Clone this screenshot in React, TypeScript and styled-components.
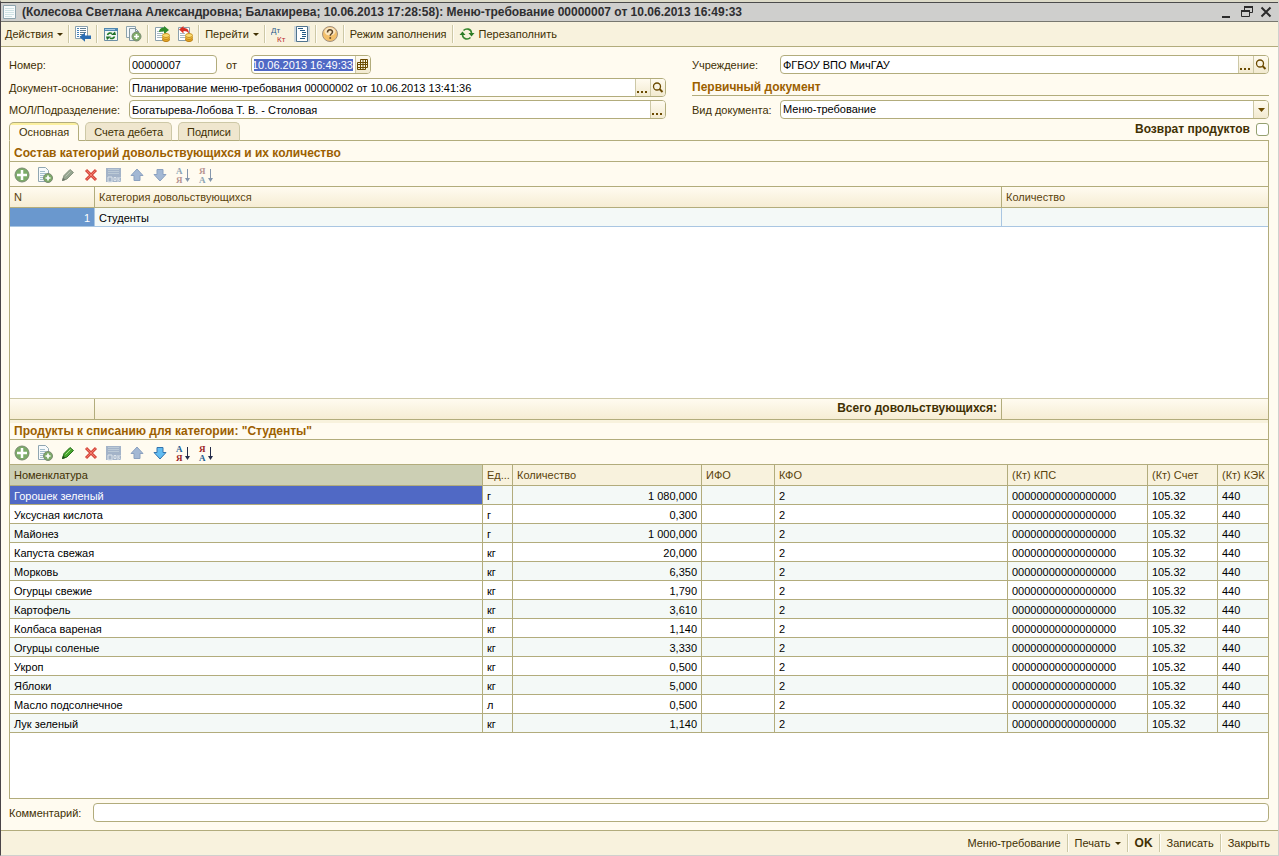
import React, { useEffect, useRef } from 'react';
import styled, { createGlobalStyle, css } from 'styled-components';

const line = '#b2ac7c';
const softLine = '#cdc8a6';
const paper = '#fffbf0';
const bar = '#f8f2dd';
const ink = '#413003';
const heading = '#9c6000';

const GlobalStyle = createGlobalStyle`
  *, *::before, *::after { box-sizing: border-box; }
  body { margin: 0; background: ${paper}; }
  body, button, input, select, table {
    font-family: "Liberation Sans", Arial, sans-serif;
    font-size: 11px;
    line-height: 15px;
    color: ${ink};
  }
`;

const Window = styled.main`
  display: flex;
  flex-direction: column;
  min-height: 100vh;
  background: ${paper};
  border: 1px solid #d0d0ce;
  border-left-color: #4a4448;
  border-top: 2px solid #dddbc9;
`;

const TitleBar = styled.header`
  display: flex;
  align-items: center;
  gap: 4px;
  height: 20px;
  padding: 0 4px 0 1px;
  background: #cfcfcd;
  border-top: 1px solid #4b4b4b;
  border-bottom: 1px solid #77776f;
`;

const Title = styled.h1`
  flex: 1;
  margin: 0;
  font-size: 12px;
  line-height: 16px;
  color: #2e2e30;
  white-space: nowrap;
`;

const WindowButtons = styled.div`
  display: flex;
  gap: 4px;
`;

const PlainButton = styled.button`
  display: flex;
  align-items: center;
  justify-content: center;
  padding: 0;
  border: 0;
  background: none;
`;

const WindowButton = styled(PlainButton)`
  width: 16px;
  height: 16px;
`;

const Separator = styled.i`
  width: 2px;
  height: 18px;
  margin: 0 5px;
  background: linear-gradient(to right, ${softLine} 50%, #fffdf6 50%);
`;

const ToolBar = styled.div`
  display: flex;
  align-items: center;
  height: 25px;
  padding: 0 4px;
  background: ${bar};
  border-bottom: 1px solid ${line};
`;

const IconGroup = styled.div`
  display: flex;
  gap: 7px;
`;

const ToolButton = styled(PlainButton)<{ $icon?: boolean; $strong?: boolean }>`
  gap: 4px;
  height: 20px;
  white-space: nowrap;
  ${p => p.$icon && css`width: 16px;`}
  ${p => p.$strong && css`font-size: 12px; font-weight: bold;`}
`;

const Content = styled.div`
  flex: 1;
  display: flex;
  flex-direction: column;
  padding: 8px 9px 8px 8px;
`;

const FormGrid = styled.div`
  display: grid;
  grid-template-columns: 657fr 577fr;
  column-gap: 26px;
  margin-bottom: 3px;
`;

const FormColumn = styled.div<{ $label: number }>`
  display: grid;
  grid-template-columns: ${p => p.$label}px minmax(0, 1fr);
  grid-template-rows: 23px 22px 19px;
`;

const Label = styled.label`
  height: 19px;
  line-height: 20px;
  white-space: nowrap;
`;

const Field = styled.div<{ $width?: number }>`
  display: flex;
  width: ${p => (p.$width ? p.$width + 'px' : '100%')};
  height: 19px;
  background: #fff;
  border: 1px solid ${line};
  border-radius: 4px;
  overflow: hidden;
`;

const control = css`
  flex: 1;
  min-width: 0;
  height: 17px;
  padding: 1px 2px;
  border: 0;
  outline: 0;
  background: none;
  color: #000;
`;

const TextInput = styled.input`
  ${control}
  &::selection { background: #5069c5; color: #fff; }
`;

const Select = styled.select`
  ${control}
  appearance: none;
`;

const FieldButton = styled(PlainButton)`
  width: 15px;
  height: 17px;
  border-left: 1px solid ${softLine};
  background: linear-gradient(${paper}, #f2ead0);
`;

const ArrowBox = styled.span`
  display: flex;
  align-items: center;
  justify-content: center;
  width: 15px;
  border-left: 1px solid ${softLine};
  background: linear-gradient(${paper}, #f2ead0);
`;

const DateRow = styled.div`
  display: flex;
`;

const DateLabel = styled(Label)`
  width: 34px;
  padding-left: 9px;
`;

const GroupTitle = styled.h2`
  grid-column: 1 / -1;
  height: 18px;
  margin: 0;
  font-size: 12px;
  line-height: 19px;
  color: ${heading};
  border-bottom: 1px solid ${line};
`;

const TabRow = styled.div`
  display: flex;
  align-items: stretch;
  height: 19px;
`;

const Tab = styled.button<{ $active?: boolean }>`
  padding: 2px ${p => (p.$active ? 9 : 8)}px 0;
  border: 1px solid ${p => (p.$active ? line : softLine)};
  border-bottom-color: ${p => (p.$active ? paper : line)};
  border-radius: 5px 5px 0 0;
  background: ${p => (p.$active ? `linear-gradient(#fbf0a0 2px, ${paper} 2px)` : '#efe6ce')};
  white-space: nowrap;
`;

const TabGap = styled.i`
  width: 6px;
  border-bottom: 1px solid ${line};
`;

const TabRest = styled.div`
  flex: 1;
  display: flex;
  justify-content: flex-end;
  border-bottom: 1px solid ${line};
`;

const CheckLabel = styled.label`
  display: flex;
  gap: 6px;
  height: 15px;
  font-size: 12px;
  font-weight: bold;
`;

const CheckBox = styled.input`
  appearance: none;
  width: 13px;
  height: 13px;
  margin: 1px 0 0;
  border: 1px solid #94a070;
  border-radius: 3px;
  background: #fff;
`;

const Panel = styled.section`
  flex: 1;
  display: flex;
  flex-direction: column;
  border: 1px solid ${line};
  border-top: 0;
`;

const SectionTitle = styled.h2<{ $divided?: boolean }>`
  height: ${p => (p.$divided ? 20 : 21)}px;
  margin: 0;
  padding: ${p => (p.$divided ? 1 : 5)}px 4px 0;
  font-size: 12px;
  line-height: 15px;
  color: ${heading};
  border-top: ${p => (p.$divided ? 3 : 0)}px solid ${bar};
  border-bottom: 1px solid ${line};
`;

const TableTools = styled.div`
  display: flex;
  align-items: center;
  gap: 7px;
  height: 25px;
  padding: 2px 4px 0;
  border-bottom: 1px solid ${line};
`;

const TableArea = styled.div<{ $share: number }>`
  flex: ${p => p.$share} 1 0;
  background: #fff;
`;

const Table = styled.table`
  width: 100%;
  border-collapse: separate;
  border-spacing: 0;
  table-layout: fixed;
`;

const HeadCell = styled.th<{ $tone?: 'shaded' | 'current' }>`
  height: 21px;
  padding: 0 4px;
  font-weight: normal;
  text-align: left;
  white-space: nowrap;
  overflow: hidden;
  color: ${p => (p.$tone === 'current' ? ink : '#5a430c')};
  background: ${p =>
    p.$tone === 'shaded' ? `linear-gradient(${paper}, #f6edd4)` : p.$tone === 'current' ? '#cccfb4' : bar};
  border-right: 1px solid ${line};
  border-bottom: 1px solid ${line};
  &:last-child { border-right: 0; padding-right: 0; }
`;

const Cell = styled.td<{ $right?: boolean; $fill?: string; $edge?: string }>`
  height: 19px;
  padding: 3px 4px 0;
  text-align: ${p => (p.$right ? 'right' : 'left')};
  white-space: nowrap;
  color: ${p => (p.$fill ? '#fff' : '#000')};
  background: ${p => p.$fill || 'transparent'};
  border-right: 1px solid ${p => p.$edge || line};
  border-bottom: 1px solid ${p => p.$edge || line};
  &:last-child { border-right: 0; }
`;

const Row = styled.tr`
  &:nth-child(odd) { background: #f4f9f7; }
`;

const TotalRow = styled.div`
  display: grid;
  grid-template-columns: 85px 1fr 266px;
  height: 22px;
  border-top: 1px solid ${softLine};
  border-bottom: 1px solid ${line};
  background: linear-gradient(${paper}, #f6edd4);
`;

const TotalCell = styled.div`
  padding: 2px 4px 0;
  font-size: 12px;
  font-weight: bold;
  text-align: right;
  border-right: 1px solid ${line};
  &:last-child { border-right: 0; }
`;

const CommentRow = styled.div`
  display: flex;
  margin-top: 4px;
`;

const CommentLabel = styled(Label)`
  flex: 0 0 84px;
`;

const Footer = styled.footer`
  display: flex;
  align-items: center;
  justify-content: flex-end;
  height: 25px;
  padding: 0 8px;
  background: ${bar};
  border-top: 1px solid ${line};
  ${Separator} { margin: 0 6px; }
`;

/* Icons */

const Svg = ({ size = 16, children }: { size?: number; children: React.ReactNode }) => (
  <svg width={size} height={size} viewBox={`0 0 ${size} ${size}`} fill="none" aria-hidden="true">{children}</svg>
);

const Caret = ({ color = ink }: { color?: string }) => (
  <svg width="7" height="4" viewBox="0 0 7 4" aria-hidden="true"><path d="M0 0h7L3.500 4z" fill={color} /></svg>
);

const SmallCaret = () => (
  <svg width="6" height="3" viewBox="0 0 6 3" aria-hidden="true"><path d="M0 0h6L3 3z" fill={ink} /></svg>
);

const Sheet = () => (
  <Svg>
    <path d="M1.500 1.500h12v13h-12z" fill="#f8fbfc" stroke="#8ea4ae" />
    <path d="M3 4.500h9M3 6.500h9M3 8.500h9M3 10.500h9M3 12.500h7" stroke="#cfe2e4" />
  </Svg>
);

const Minimize = () => <Svg><path d="M4 12h8v2H4z" fill="#2b2b2b" /></Svg>;
const Restore = () => (
  <Svg>
    <path d="M6.500 6V2.500h8v6H12" stroke="#2b2b2b" /><path d="M6 2h9v2H6z" fill="#2b2b2b" />
    <path d="M3.500 6.500h8v6h-8z" stroke="#2b2b2b" /><path d="M3 6h9v2H3z" fill="#2b2b2b" />
  </Svg>
);
const Close = () => <Svg><path d="M3.500 3.500l9 9M12.500 3.500l-9 9" stroke="#2b2b2b" strokeWidth="2" /></Svg>;

const PostAndClose = () => (
  <Svg>
    <path d="M.5 .5h12v12H.5z" fill="#fff" stroke="#8ba1ad" />
    <path d="M5 2.500h6M5 4.500h6M5 6.500h6M5 8.500h3M5 10.500h1" stroke="#5f7f93" />
    <path d="M2 2.500h2M2 4.500h2M2 6.500h2M2 8.500h2M2 10.500h2" stroke="#4382b8" />
    <path d="M4.500 11l5.500-4.500V9.500h6v3.500h-6v2.800z" fill="#2a6db2" />
  </Svg>
);

const Reread = () => (
  <Svg>
    <path d="M1.500 2.500h13v12h-13z" fill="#f3f7f5" stroke="#6c8fa5" />
    <path d="M1 2h14v3H1z" fill="#4f87b0" />
    <path d="M2 3.500h10" stroke="#a8cbe2" />
    <path d="M4.500 9C5 7 7.500 6.500 9 7.500M11.500 10.500C11 12.500 8.500 13 7 12" stroke="#247a2c" strokeWidth="1.600" />
    <path d="M8 9h5l-1-3.500zM3 10.500h5L4 14z" fill="#1d6f27" />
  </Svg>
);

const Badge = ({ x, y, r = 4 }: { x: number; y: number; r?: number }) => (
  <>
    <circle cx={x} cy={y} r={r} fill="#7cab68" stroke="#7b8a72" />
    <path d={`M${x - r + 2} ${y}h${2 * r - 4}M${x} ${y - r + 2}v${2 * r - 4}`} stroke="#fff" strokeWidth={r > 5 ? 2.500 : 1.700} />
  </>
);

const CopyDoc = () => (
  <Svg>
    <path d="M.5 .5h9v11h-9z" fill="#f4f8f9" stroke="#8da3ad" />
    <path d="M3.500 2.500h6l3 3v9h-9z" fill="#eef4f6" stroke="#8298a3" />
    <path d="M9.500 2.500v3h3" stroke="#8298a3" />
    <Badge x={10.5} y={10.5} r={4.5} />
  </Svg>
);

const Coins = () => (
  <>
    <ellipse cx="12" cy="13.500" rx="3.500" ry="2" fill="#e8aa28" stroke="#b77a12" />
    <ellipse cx="12" cy="11.500" rx="3.500" ry="2" fill="#f3bd3c" stroke="#c38a1c" />
    <ellipse cx="12" cy="9.500" rx="3.500" ry="2" fill="#fadb72" stroke="#c99424" />
  </>
);

const Post = () => (
  <Svg>
    <path d="M1.500 1.500h10v13h-10z" fill="#fff" stroke="#8aa0ac" />
    <path d="M3 5.500h6M3 7.500h6M3 9.500h5M3 11.500h5" stroke="#a9bac4" />
    <path d="M5 6c0-3 2-4.500 5-4.500V0l5 4-5 4V5.500C8 5.500 7 5 5 6z" fill="#2f8a2b" />
    <Coins />
  </Svg>
);

const Unpost = () => (
  <Svg>
    <path d="M1.500 1.500h11v13h-11z" fill="#fff" stroke="#8aa0ac" />
    <path d="M3 7.500h5M3 9.500h5M3 11.500h5" stroke="#a9bac4" />
    <path d="M2 3.500L6.500 0v2c4 0 5.500 2 5.500 6-1-2-2-3-5.500-3v2.500z" fill="#d82f22" />
    <Coins />
  </Svg>
);

const DebitCredit = () => (
  <svg width="16" height="20" viewBox="0 0 16 20" fill="none" aria-hidden="true">
    <text x="0" y="9" fontSize="8" fill="#2f5d8c" fontFamily="Liberation Sans">Дт</text>
    <text x="6" y="18" fontSize="8" fill="#bd3030" fontFamily="Liberation Sans">Кт</text>
  </svg>
);

const Journal = () => (
  <Svg>
    <path d="M0 0h16v16H0z" fill="#cfd8dc" />
    <path d="M2.500 .5h11v15h-11z" fill="#fff" stroke="#50748e" />
    <path d="M4 2.500h5M6 4.500h5M8 6.500h4M8 8.500h4M8 10.500h4M6 12.500h5" stroke="#245b86" />
  </Svg>
);

const Help = () => (
  <Svg>
    <circle cx="8" cy="8" r="7.500" fill="#f3c06c" stroke="#a09080" />
    <ellipse cx="8" cy="5.500" rx="5.500" ry="4" fill="#fae6c2" />
    <path d="M5.500 6.500c0-3.500 5-3.500 5-.5 0 1.800-2.300 1.800-2.300 3.800" stroke="#5c4426" strokeWidth="1.500" />
    <path d="M7.400 11.200h1.700v1.600H7.400z" fill="#5c4426" />
  </Svg>
);

const Refill = () => (
  <Svg>
    <path d="M4.500 4.500C7 2 12 2.500 12.500 7M11.500 11.500C9 14 4 13.500 3.500 9" stroke="#37862f" strokeWidth="1.600" />
    <path d="M9.500 7h6l-3 3.500zM.5 9h6l-3-3.500z" fill="#2b7a26" />
  </Svg>
);

const Add = () => <Svg><Badge x={8} y={8} r={7} /></Svg>;
const AddCopy = () => (
  <Svg>
    <path d="M1.500 .5h7l3 3v11h-10z" fill="#f7fafb" stroke="#90a6b1" />
    <path d="M3 4.500h5M3 6.500h6M3 8.500h4M3 10.500h3M3 12.500h3" stroke="#a4bfcc" />
    <Badge x={11} y={11} r={4.5} />
  </Svg>
);
const Pencil = ({ on }: { on?: boolean }) => (
  <Svg>
    <path d="M2.500 13.500l1.500-5 6-6 3.500 3-6.500 6.500z" fill={on ? '#48a62e' : '#95a590'} stroke={on ? '#28701c' : '#87937f'} />
    <path d="M5.500 9.500l5-5" stroke={on ? '#a7de8a' : '#b8c2b0'} />
    <path d="M2 14l1-3.500L5.500 13z" fill={on ? '#1d4d18' : '#6e776a'} />
  </Svg>
);
const Delete = () => (
  <Svg>
    <path d="M3 3l10 10M13 3L3 13" stroke="#d5483c" strokeWidth="3" />
    <path d="M3.500 3.500l9 9M12.500 3.500l-9 9" stroke="#f3786a" />
  </Svg>
);
const SaveRow = () => (
  <Svg>
    <path d="M0 1h15v14H0z" fill="#a3b3c8" />
    <path d="M2 2.500h11M2 4.500h11M2 6.500h11" stroke="#bccad6" />
    <path d="M2 10h4v5H2zM8 10.500h2v3H8zM12 10v5M14.500 10l-2 2 2 2.500" stroke="#dde4ea" />
  </Svg>
);
const MoveUp = () => <Svg><path d="M8 2l6 6.500h-3v5H5v-5H2z" fill="#a3b8d4" stroke="#8ba1c0" /></Svg>;
const MoveDown = ({ on }: { on?: boolean }) => (
  <Svg><path d="M8 14l6-6.500h-3v-5H5v5H2z" fill={on ? '#62bdf2' : '#a3b8d4'} stroke={on ? '#3474ad' : '#8ba1c0'} /></Svg>
);
const Sort = ({ on, letters }: { on?: boolean; letters: [string, string] }) => {
  const tint = (l: string) => (l === 'А' ? (on ? '#1c5f94' : '#8ca3b3') : on ? '#9c1f26' : '#b89492');
  const arrow = on ? '#232b4a' : '#8496ac';
  return (
    <svg width="16" height="20" viewBox="0 0 16 20" fill="none" aria-hidden="true">
      <text x="1" y="9" fontSize="9" fontWeight="bold" fontFamily="Liberation Serif" fill={tint(letters[0])}>{letters[0]}</text>
      <text x="1" y="18" fontSize="9" fontWeight="bold" fontFamily="Liberation Serif" fill={tint(letters[1])}>{letters[1]}</text>
      <path d="M12.500 4v12" stroke={arrow} /><path d="M10 13h5l-2.500 4z" fill={arrow} />
    </svg>
  );
};

const Dots = () => <Svg size={14}><path d="M1 10h2v2H1zM5 10h2v2H5zM9 10h2v2H9z" fill="#6b4a00" /></Svg>;
const Loupe = () => (
  <Svg size={14}>
    <circle cx="6" cy="5.500" r="3.500" stroke="#6b4a00" strokeWidth="1.300" />
    <path d="M8.500 8l3 3" stroke="#6b4a00" strokeWidth="2" />
  </Svg>
);
const Calendar = () => (
  <Svg size={14}>
    <path d="M4.500 1.500h7v8h-2v2h-8v-7h3z" stroke="#6b4a00" />
    <path d="M2 6.500h9M2 9.500h7M4.500 4.500h7M4.500 2v9M7 2v9M9.500 2v8" stroke="#6b4a00" />
  </Svg>
);

/* Data */

type Product = [name: string, unit: string, amount: string];

const products: Product[] = [
  ['Горошек зеленый', 'г', '1 080,000'],
  ['Уксусная кислота', 'г', '0,300'],
  ['Майонез', 'г', '1 000,000'],
  ['Капуста свежая', 'кг', '20,000'],
  ['Морковь', 'кг', '6,350'],
  ['Огурцы свежие', 'кг', '1,790'],
  ['Картофель', 'кг', '3,610'],
  ['Колбаса вареная', 'кг', '1,140'],
  ['Огурцы соленые', 'кг', '3,330'],
  ['Укроп', 'кг', '0,500'],
  ['Яблоки', 'кг', '5,000'],
  ['Масло подсолнечное', 'л', '0,500'],
  ['Лук зеленый', 'кг', '1,140'],
];

const RowTools = ({ on }: { on?: boolean }) => (
  <TableTools>
    <ToolButton $icon aria-label="Добавить"><Add /></ToolButton>
    <ToolButton $icon aria-label="Скопировать"><AddCopy /></ToolButton>
    <ToolButton $icon aria-label="Изменить"><Pencil on={on} /></ToolButton>
    <ToolButton $icon aria-label="Удалить"><Delete /></ToolButton>
    <ToolButton $icon aria-label="Закончить редактирование"><SaveRow /></ToolButton>
    <ToolButton $icon aria-label="Вверх"><MoveUp /></ToolButton>
    <ToolButton $icon aria-label="Вниз"><MoveDown on={on} /></ToolButton>
    <ToolButton $icon aria-label="По возрастанию"><Sort on={on} letters={['А', 'Я']} /></ToolButton>
    <ToolButton $icon aria-label="По убыванию"><Sort on={on} letters={['Я', 'А']} /></ToolButton>
  </TableTools>
);

export default function App() {
  const dateRef = useRef<HTMLInputElement>(null);

  useEffect(() => {
    dateRef.current?.focus();
    dateRef.current?.select();
  }, []);

  return (
    <Window>
      <GlobalStyle />
      <TitleBar>
        <Sheet />
        <Title>(Колесова Светлана Александровна; Балакирева; 10.06.2013 17:28:58): Меню-требование 00000007 от 10.06.2013 16:49:33</Title>
        <WindowButtons>
          <WindowButton aria-label="Свернуть"><Minimize /></WindowButton>
          <WindowButton aria-label="Восстановить"><Restore /></WindowButton>
          <WindowButton aria-label="Закрыть окно"><Close /></WindowButton>
        </WindowButtons>
      </TitleBar>

      <ToolBar>
        <ToolButton>Действия <SmallCaret /></ToolButton>
        <Separator />
        <ToolButton $icon aria-label="Провести и закрыть"><PostAndClose /></ToolButton>
        <Separator />
        <IconGroup>
          <ToolButton $icon aria-label="Перечитать"><Reread /></ToolButton>
          <ToolButton $icon aria-label="Скопировать"><CopyDoc /></ToolButton>
        </IconGroup>
        <Separator />
        <IconGroup>
          <ToolButton $icon aria-label="Провести"><Post /></ToolButton>
          <ToolButton $icon aria-label="Отмена проведения"><Unpost /></ToolButton>
        </IconGroup>
        <Separator />
        <ToolButton>Перейти <SmallCaret /></ToolButton>
        <Separator />
        <IconGroup>
          <ToolButton $icon aria-label="Проводки"><DebitCredit /></ToolButton>
          <ToolButton $icon aria-label="Журнал"><Journal /></ToolButton>
        </IconGroup>
        <Separator />
        <ToolButton $icon aria-label="Справка"><Help /></ToolButton>
        <Separator />
        <ToolButton>Режим заполнения</ToolButton>
        <Separator />
        <ToolButton><Refill />Перезаполнить</ToolButton>
      </ToolBar>

      <Content>
        <FormGrid>
          <FormColumn $label={120}>
            <Label htmlFor="number">Номер:</Label>
            <DateRow>
              <Field $width={88}><TextInput id="number" defaultValue="00000007" /></Field>
              <DateLabel htmlFor="date">от</DateLabel>
              <Field $width={120}>
                <TextInput id="date" ref={dateRef} defaultValue="10.06.2013 16:49:33" />
                <FieldButton aria-label="Календарь"><Calendar /></FieldButton>
              </Field>
            </DateRow>
            <Label htmlFor="basis">Документ-основание:</Label>
            <Field>
              <TextInput id="basis" defaultValue="Планирование меню-требования 00000002 от 10.06.2013 13:41:36" />
              <FieldButton aria-label="Выбрать основание"><Dots /></FieldButton>
              <FieldButton aria-label="Открыть основание"><Loupe /></FieldButton>
            </Field>
            <Label htmlFor="unit">МОЛ/Подразделение:</Label>
            <Field>
              <TextInput id="unit" defaultValue="Богатырева-Лобова Т. В. - Столовая" />
              <FieldButton aria-label="Выбрать подразделение"><Dots /></FieldButton>
            </Field>
          </FormColumn>
          <FormColumn $label={88}>
            <Label htmlFor="org">Учреждение:</Label>
            <Field>
              <TextInput id="org" defaultValue="ФГБОУ ВПО МичГАУ" />
              <FieldButton aria-label="Выбрать учреждение"><Dots /></FieldButton>
              <FieldButton aria-label="Открыть учреждение"><Loupe /></FieldButton>
            </Field>
            <GroupTitle>Первичный документ</GroupTitle>
            <Label htmlFor="kind">Вид документа:</Label>
            <Field>
              <Select id="kind"><option>Меню-требование</option></Select>
              <ArrowBox><Caret color="#6b4a00" /></ArrowBox>
            </Field>
          </FormColumn>
        </FormGrid>

        <TabRow>
          <Tab $active>Основная</Tab>
          <TabGap />
          <Tab>Счета дебета</Tab>
          <TabGap />
          <Tab>Подписи</Tab>
          <TabRest>
            <CheckLabel>Возврат продуктов<CheckBox type="checkbox" /></CheckLabel>
          </TabRest>
        </TabRow>

        <Panel>
          <SectionTitle>Состав категорий довольствующихся и их количество</SectionTitle>
          <RowTools />
          <TableArea $share={211}>
            <Table>
              <colgroup><col width="85" /><col /><col width="266" /></colgroup>
              <thead>
                <tr>
                  <HeadCell $tone="shaded">N</HeadCell>
                  <HeadCell $tone="shaded">Категория довольствующихся</HeadCell>
                  <HeadCell $tone="shaded">Количество</HeadCell>
                </tr>
              </thead>
              <tbody>
                <Row>
                  <Cell $right $fill="#6a98ce" $edge="#a9c6e2">1</Cell>
                  <Cell $edge="#a9c6e2">Студенты</Cell>
                  <Cell $edge="#a9c6e2" />
                </Row>
              </tbody>
            </Table>
          </TableArea>
          <TotalRow>
            <TotalCell />
            <TotalCell>Всего довольствующихся:</TotalCell>
            <TotalCell />
          </TotalRow>

          <SectionTitle $divided>Продукты к списанию для категории: "Студенты"</SectionTitle>
          <RowTools on />
          <TableArea $share={333}>
            <Table>
              <colgroup>
                <col /><col width="30" /><col width="189" /><col width="73" />
                <col width="233" /><col width="140" /><col width="70" /><col width="50" />
              </colgroup>
              <thead>
                <tr>
                  <HeadCell $tone="current">Номенклатура</HeadCell>
                  <HeadCell>Ед...</HeadCell>
                  <HeadCell>Количество</HeadCell>
                  <HeadCell>ИФО</HeadCell>
                  <HeadCell>КФО</HeadCell>
                  <HeadCell>(Кт) КПС</HeadCell>
                  <HeadCell>(Кт) Счет</HeadCell>
                  <HeadCell>(Кт) КЭК</HeadCell>
                </tr>
              </thead>
              <tbody>
                {products.map(([name, unit, amount], i) => (
                  <Row key={name}>
                    <Cell $fill={i === 0 ? '#5069c5' : undefined}>{name}</Cell>
                    <Cell>{unit}</Cell>
                    <Cell $right>{amount}</Cell>
                    <Cell />
                    <Cell>2</Cell>
                    <Cell>00000000000000000</Cell>
                    <Cell>105.32</Cell>
                    <Cell>440</Cell>
                  </Row>
                ))}
              </tbody>
            </Table>
          </TableArea>
        </Panel>

        <CommentRow>
          <CommentLabel htmlFor="comment">Комментарий:</CommentLabel>
          <Field><TextInput id="comment" /></Field>
        </CommentRow>
      </Content>

      <Footer>
        <ToolButton>Меню-требование</ToolButton>
        <Separator />
        <ToolButton>Печать <SmallCaret /></ToolButton>
        <Separator />
        <ToolButton $strong>OK</ToolButton>
        <Separator />
        <ToolButton>Записать</ToolButton>
        <Separator />
        <ToolButton>Закрыть</ToolButton>
      </Footer>
    </Window>
  );
}
